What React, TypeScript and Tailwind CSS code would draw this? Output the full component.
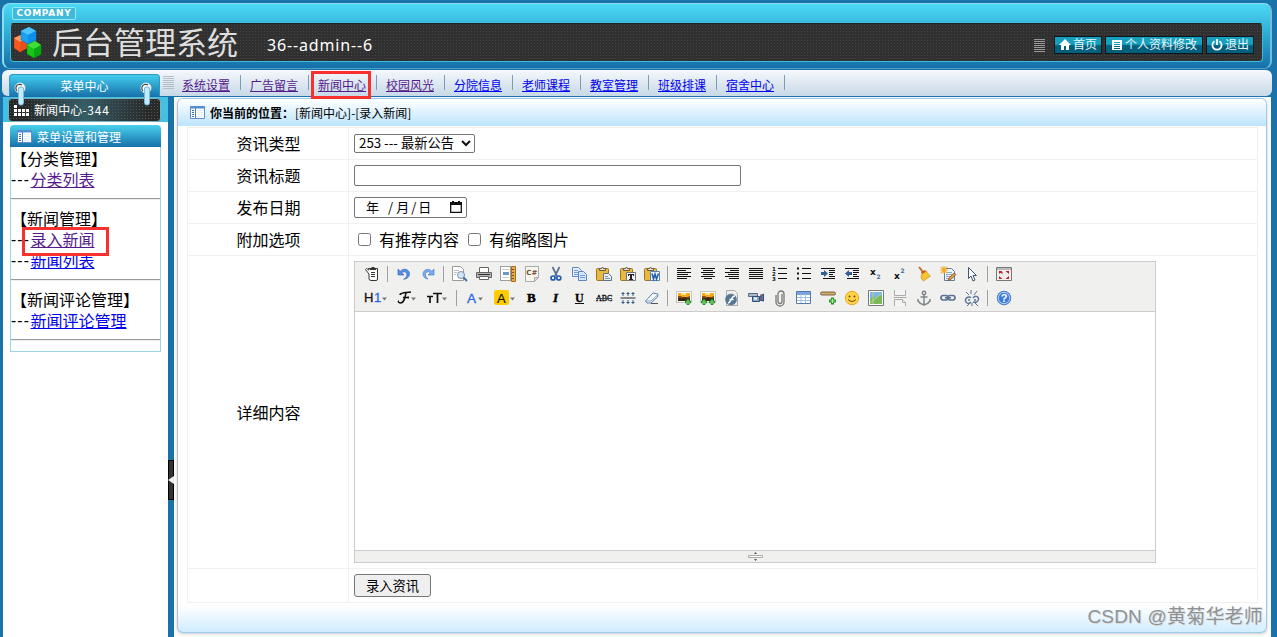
import type { ReactNode } from 'react';

type Tool = { name: string; icon: ReactNode; width?: string };
type MenuLink = { label: string; visited?: boolean; marked?: boolean };

const NAV_LINKS: MenuLink[] = [
  { label: '系统设置', visited: true },
  { label: '广告留言', visited: true },
  { label: '新闻中心', visited: true, marked: true },
  { label: '校园风光', visited: true },
  { label: '分院信息' },
  { label: '老师课程' },
  { label: '教室管理' },
  { label: '班级排课' },
  { label: '宿舍中心' },
];

const MENU_GROUPS: { title: string; links: MenuLink[] }[] = [
  { title: '分类管理', links: [{ label: '分类列表', visited: true }] },
  {
    title: '新闻管理',
    links: [{ label: '录入新闻', visited: true, marked: true }, { label: '新闻列表' }],
  },
  { title: '新闻评论管理', links: [{ label: '新闻评论管理' }] },
];

const lines = (rows: number[][]) => (
  <g shapeRendering="crispEdges" stroke="#111" strokeWidth="1">
    {rows.map(([x1, x2, y]) => (
      <path d={`M${x1} ${y + 0.5}H${x2}`} key={`${x1}-${y}`} />
    ))}
  </g>
);

const Clipboard = ({ children }: { children: ReactNode }) => (
  <>
    <rect fill="#e8b93c" height="12" rx="1" stroke="#9a7424" width="12" x=".5" y="2.500" />
    <path d="M3.500 4.500V2.500h2l1-1.500 1 1.500h2v2z" fill="#ddd" stroke="#665a3a" />
    {children}
  </>
);

const Photo = () => (
  <>
    <rect fill="#fff" height="11" stroke="#c4c4c4" width="15" x=".5" y="1.500" />
    <path d="M2 3h12v4H2z" fill="#f8a81c" />
    <path d="M5 3h5v2H5z" fill="#ffe27a" />
    <path d="M2 7h12v4H2z" fill="#3c2712" />
    <path d="M2 6l3 0 3 2 3-1 3-1v2H2z" fill="#8a4c10" />
  </>
);

const Plus = ({ x }: { x: number }) => (
  <>
    <path d={`M${x} 12h6M${x + 3} 9v6`} stroke="#23902a" strokeWidth="2.600" />
    <path d={`M${x + 1} 12h4M${x + 3} 10v4`} stroke="#7ddc6e" strokeWidth="1" />
  </>
);

const Caret = ({ x }: { x: number }) => <path d={`M${x} 7.500h5l-2.500 3z`} fill="#777" />;

const ROW_ONE: (Tool | null)[] = [
  {
    name: 'source',
    icon: (
      <g fill="none" stroke="#333">
        <path d="M4.500 2.500h9v10.500q0 1.500-1.500 1.500H7q-2 0-2-2V8L1.500 3.500l1-1L5 4z" fill="#fff" />
        <path d="M6 3.500h6M7.500 1.500h3M7 6.500h4M7 8.500h4M7 10.500h4" />
      </g>
    ),
  },
  null,
  {
    name: 'undo',
    icon: <path d="M2 3v6h6L5.800 6.800C8 4.800 11 6 10.800 9c-.1 2-1.500 3.500-3.300 4.300 3.500-.3 6-2.300 6-5.500C13.500 3.500 8 1.500 4.200 5.200z" fill="#5b8ee0" stroke="#2c62b8" strokeWidth=".6" />,
  },
  {
    name: 'redo',
    icon: <path d="M14 3v6H8l2.200-2.200C8 4.800 5.500 6 5.500 8.500c0 2 1 3.500 2.500 4.500-3-.3-5-2.300-5-5C3 4 8 1.500 11.800 5.200z" fill="#7eaeea" stroke="#3973c4" strokeWidth=".6" />,
  },
  null,
  {
    name: 'preview',
    icon: (
      <g fill="none">
        <path d="M.5.5h8l3 3v11H.500z" fill="#fff" stroke="#9a9a9a" />
        <path d="M2 4.500h5M2 6.500h3M2 8.500h2" stroke="#bbb" />
        <circle cx="9" cy="9" fill="#cfe5f8" r="3.500" stroke="#7a8fa8" />
        <path d="M11.500 11.500l3.500 3.500" stroke="#4b6d9a" strokeWidth="2" />
      </g>
    ),
  },
  {
    name: 'print',
    icon: (
      <g stroke="#666">
        <path d="M3.500 1.500h9v5h-9z" fill="#fff" />
        <path d="M.5 6.500h15v5H.500z" fill="#b5b5b5" />
        <path d="M2 8.500h12" stroke="#333" />
        <path d="M3.500 10.500h9v3h-9z" fill="#fff" />
      </g>
    ),
  },
  {
    name: 'template',
    icon: (
      <>
        <path d="M.5.5h10v14H.5z" fill="#fff" stroke="#444" strokeDasharray="1 1" />
        <path d="M2 3h7v1H2zM2 11h7v1H2z" fill="#ccc" />
        <path d="M3 6h6v3H3z" fill="#6d97cb" />
        <path d="M11.500.5h4v15h-4z" fill="#e6ad4c" stroke="#a86e1b" />
        <path d="M12 3.500h2M12 6.500h2M12 9.500h2M12 12.500h2" stroke="#805217" />
      </>
    ),
  },
  {
    name: 'code',
    icon: (
      <>
        <path d="M1.500.5h13v11l-4 4h-9z" fill="#f7f5ef" stroke="#aaa" />
        <path d="M10.500 15.500v-4h4z" fill="#ddd" stroke="#aaa" />
        <text fill="#78502c" fontFamily="DejaVu Sans" fontSize="7" fontWeight="bold" x="2.300" y="9">C#</text>
      </>
    ),
  },
  {
    name: 'cut',
    icon: (
      <g fill="none">
        <path d="M4.500 1l4.500 9M11.500 1L7 10" stroke="#587291" strokeWidth="1.700" />
        <circle cx="5" cy="12" r="2" stroke="#235ca8" strokeWidth="1.700" />
        <circle cx="10.800" cy="12" r="2" stroke="#235ca8" strokeWidth="1.700" />
      </g>
    ),
  },
  {
    name: 'copy',
    icon: (
      <g stroke="#5d86c2">
        <path d="M.5 1.500h6l3 3v6h-9z" fill="#e5f0fd" />
        <path d="M2 4.500h4M2 6.500h5M2 8.500h5" strokeWidth=".8" />
        <path d="M6.500 5.500h5l3 3v6h-8z" fill="#d1e5fb" />
        <path d="M8 9.500h5M8 11.500h5" strokeWidth=".8" />
      </g>
    ),
  },
  {
    name: 'paste',
    icon: <Clipboard><path d="M7.500 7.500h5l3 3v4h-8z" fill="#e9eef5" stroke="#5d7188" /><path d="M9 10.500h3M9 12.500h5" stroke="#7b91aa" /></Clipboard>,
  },
  {
    name: 'plainpaste',
    icon: <Clipboard><path d="M6.500 6.500h9v8h-9z" fill="#edf1f5" stroke="#777" /><path d="M8 8h6v2h-1V9h-1v4h1v1H9v-1h1V9H9v1H8z" fill="#222" /></Clipboard>,
  },
  {
    name: 'wordpaste',
    icon: <Clipboard><path d="M6.500 5.500h9v9h-9z" fill="#edf4fd" stroke="#5a82b5" /><path d="M8 7.500l1.500 5.500 1.500-5 1.500 5 2-5.500" fill="none" stroke="#235aa9" strokeWidth="1.500" /></Clipboard>,
  },
  null,
  { name: 'left', icon: lines([[1, 15, 2], [1, 10, 4], [1, 15, 6], [1, 12, 8], [1, 15, 10], [1, 11, 12]]) },
  { name: 'center', icon: lines([[1, 15, 2], [3, 13, 4], [1, 15, 6], [3, 13, 8], [1, 15, 10], [4, 12, 12]]) },
  { name: 'right', icon: lines([[1, 15, 2], [6, 15, 4], [1, 15, 6], [4, 15, 8], [1, 15, 10], [5, 15, 12]]) },
  { name: 'full', icon: lines([[1, 15, 2], [1, 15, 4], [1, 15, 6], [1, 15, 8], [1, 15, 10], [1, 15, 12]]) },
  {
    name: 'orderedlist',
    icon: <>{lines([[6, 15, 2], [6, 15, 7], [6, 15, 12]])}<g fill="#111" fontFamily="DejaVu Sans" fontSize="5.500" fontWeight="bold"><text x="0" y="5">1</text><text x="0" y="10">2</text><text x="0" y="15">3</text></g></>,
  },
  {
    name: 'unorderedlist',
    icon: <>{lines([[6, 15, 2], [6, 15, 7], [6, 15, 12]])}<path d="M1 1.500h2v2H1zM1 6.500h2v2H1zM1 11.500h2v2H1z" fill="#111" /></>,
  },
  {
    name: 'indent',
    icon: <>{lines([[1, 15, 2], [9, 15, 4], [9, 15, 6], [9, 13, 8], [9, 15, 10], [3, 15, 12]])}<path d="M1 6h3V4l4 3.500L4 11V9H1z" fill="#355f94" /></>,
  },
  {
    name: 'outdent',
    icon: <>{lines([[1, 15, 2], [9, 15, 4], [9, 15, 6], [9, 13, 8], [9, 15, 10], [3, 15, 12]])}<path d="M8 6H5V4L1 7.500 5 11V9h3z" fill="#355f94" /></>,
  },
  {
    name: 'subscript',
    icon: <g fontFamily="DejaVu Sans" fontWeight="bold"><text fill="#111" fontSize="9" x="2" y="9">x</text><text fill="#42658f" fontSize="6" x="8.500" y="13">2</text></g>,
  },
  {
    name: 'superscript',
    icon: <g fontFamily="DejaVu Sans" fontWeight="bold"><text fill="#111" fontSize="9" x="2" y="13">x</text><text fill="#42658f" fontSize="6" x="8.500" y="7">2</text></g>,
  },
  {
    name: 'quickformat',
    icon: <><path d="M3 1l4 5" stroke="#b9762a" strokeWidth="2" /><path d="M5 6l4-2 2 3-4 3z" fill="#d94d2c" /><path d="M5.500 8.500l5-3.500c1 3 3 4 4 5l-7 5c-2-1-3-4-2-6.500z" fill="#f6c42d" stroke="#b88714" strokeWidth=".6" /></>,
  },
  {
    name: 'selectall',
    icon: (
      <>
        <path d="M4.500 2.500h7l3 3v9h-10z" fill="#edf3fa" stroke="#657c9d" />
        <path d="M6 6.500h6M6 8.500h6M6 10.500h5M6 12.500h6" stroke="#8ba5c5" />
        <path d="M4 0v8M0 4h8M1 1l6 6M7 1L1 7" stroke="#f3ae24" strokeWidth="1.200" />
        <path d="M9 12l5-5 2 1.500-5 5-3 1z" fill="#e29a46" stroke="#7a4820" strokeWidth=".7" />
      </>
    ),
  },
  { name: 'select', icon: <path d="M4.500 1.500v11l2.500-2.500 2 5 2-1-2-4.500h3.500z" fill="#fff" stroke="#40526c" /> },
  null,
  {
    name: 'fullscreen',
    icon: (
      <>
        <path d="M.5 1.500h15v13H.5z" fill="#f2eeee" stroke="#777" />
        <path d="M1 2h14v2H1z" fill="#bbb" />
        <path d="M3 5.500l4 .5-1 1 1.500 1.500L3 6zM3 5h3.500L3 8zM13 5H9.500L13 8zM3 13h3.500L3 10zM13 13H9.500L13 10z" fill="#b6202a" />
      </>
    ),
  },
];

const ROW_TWO: (Tool | null)[] = [
  { name: 'formatblock', width: 'w-[31px]', icon: <><text fill="#111" fontFamily="Liberation Sans" fontSize="13" letterSpacing=".6" stroke="#111" strokeWidth=".3" x="0" y="12">H<tspan fill="#2866e8" stroke="#2866e8">1</tspan></text><Caret x={18} /></> },
  { name: 'fontname', width: 'w-[31px]', icon: <><path d="M6 3.500C8 2 11 3 15 2M10 3C9 8 8 13 4.500 13 2 13 2 11 3 11M7 7.500h5.500M12.500 6.500l-.5 2M4 5c0-1 1-1.500 2-1.500" fill="none" stroke="#111" strokeWidth="1.400" transform="translate(1)" /><Caret x={16} /></> },
  { name: 'fontsize', width: 'w-[31px]', icon: <><path d="M1 6.500h6M4 6.500V13M7 3.500h9M11.500 3.500V13" stroke="#111" strokeWidth="1.700" /><Caret x={16} /></> },
  null,
  { name: 'forecolor', width: 'w-[29px]', icon: <><text fill="#2866e8" fontFamily="Liberation Sans" fontSize="13.500" stroke="#2866e8" strokeWidth=".3" x="2" y="13">A</text><Caret x={13} /></> },
  { name: 'hilitecolor', width: 'w-[30px]', icon: <><rect fill="#fc0" height="15" rx="2" width="15" x="0" y="0" /><text fill="#111" fontFamily="Liberation Sans" fontSize="13" stroke="#111" strokeWidth=".2" x="3" y="12.500">A</text><Caret x={16} /></> },
  { name: 'bold', icon: <text fontFamily="Liberation Serif" fontSize="13" fontWeight="bold" stroke="#000" strokeWidth=".5" x="3" y="12">B</text> },
  { name: 'italic', icon: <text fontFamily="Liberation Serif" fontSize="13" fontStyle="italic" fontWeight="bold" stroke="#000" strokeWidth=".4" x="5" y="12">I</text> },
  { name: 'underline', icon: <><text fontFamily="Liberation Serif" fontSize="12" fontWeight="bold" stroke="#000" strokeWidth=".3" x="3" y="11.500">U</text><path d="M3 13.500h9" stroke="#111" /></> },
  { name: 'strikethrough', icon: <><text fontFamily="Liberation Serif" fontSize="8" stroke="#000" strokeWidth=".3" x="0" y="11">ABC</text><path d="M0 8.500h16" stroke="#35475e" /></> },
  { name: 'lineheight', icon: <><path d="M.5 8h15" stroke="#888" strokeWidth="2" /><path d="M3 2v4M8 2v4M13 2v4M1.500 3.500h3M6.500 3.500h3M11.500 3.500h3M3 10v4M8 10v4M13 10v4M1.500 12.500h3M6.500 12.500h3M11.500 12.500h3" stroke="#284d79" strokeWidth=".9" /></> },
  { name: 'removeformat', icon: <><path d="M9 3l5 1-.5 3L7 13H3l-1.500-2z" fill="#f7faff" stroke="#6181ab" /><path d="M1.500 11l5.500 0L13.500 5" fill="none" stroke="#89a3c4" /><path d="M7 13.500h7" stroke="#555" /></> },
  null,
  { name: 'image', icon: <><Photo /><Plus x={9} /></> },
  { name: 'multiimage', icon: <><Photo /><Plus x={1} /><Plus x={9} /></> },
  { name: 'flash', icon: <><path d="M2.500.5h8l3 3v12h-11z" fill="#eee" stroke="#aaa" /><circle cx="7" cy="9.500" fill="#55769b" r="5.500" stroke="#6d7b89" strokeWidth=".7" /><path d="M4 13c3 0 3-7 7-7M5.500 9.500h4" fill="none" stroke="#fff" strokeWidth="1.600" /></> },
  { name: 'media', icon: <><path d="M.5 3.500h9v3h-9z" fill="#a8bacd" stroke="#536a84" /><path d="M4.500 6.500h7v5h-7z" fill="#87a7ca" stroke="#345374" /><path d="M11.500 7l4-3v7l-4-1z" fill="#5580b1" stroke="#2e4b6b" /><path d="M6 8.500h3" stroke="#fff" strokeWidth="2" /><path d="M13 4v7" stroke="#983b48" /></> },
  { name: 'insertfile', icon: <path d="M10 4v7.500a2 2 0 0 1-4 0V4a3 3 0 0 1 6 0v8a4 4 0 0 1-8 0V5" fill="none" stroke="#777" strokeWidth="1.300" /> },
  { name: 'table', icon: <><path d="M.5 1.500h14v12H.5z" fill="#fff" stroke="#5278ae" /><path d="M1 2h13v3H1z" fill="#7ba4dc" /><path d="M1 7.500h13M1 10.500h13M5 4v9M9.500 4v9" stroke="#a5bfe0" /></> },
  { name: 'hr', icon: <><rect fill="#d1ad72" height="3" rx="1.500" stroke="#654620" strokeWidth=".8" width="15" x=".5" y="2" /><path d="M9 11h7M12.500 7.500v7" stroke="#279a27" strokeWidth="3" /><path d="M10.500 11h4M12.500 9v4" stroke="#b5eeac" /></> },
  { name: 'emoticons', icon: <><circle cx="8" cy="8" fill="#ffd447" r="6.700" stroke="#e9a620" /><circle cx="5.500" cy="6.500" fill="#76470e" r="1" /><circle cx="10.500" cy="6.500" fill="#76470e" r="1" /><path d="M4 9.500q4 4 8 0" fill="none" stroke="#76470e" /></> },
  { name: 'baidumap', icon: <><path d="M.5.5h15v15H.5z" fill="#fff" stroke="#777" /><path d="M2 2h12v12H2z" fill="#7db5e7" /><path d="M2 10l3-4 3 2 3-3 3 1v8H2z" fill="#7cb95a" /><path d="M2 13L13 4M5 2v12" stroke="#b2d88c" /></> },
  { name: 'pagebreak', icon: <g fill="#f5f5f5" stroke="#aaa"><path d="M2.500 0v5.500h11V0M2.500 16V9.500h8l3 3V16" /><path d="M10.500 9.500v3h3M1.500 7.500h13" /></g> },
  { name: 'anchor', icon: <g fill="none" stroke="#7e858b" strokeWidth="1.500"><circle cx="8" cy="3" r="1.700" /><path d="M8 5v10M4.500 7h7M2 9v2c2 3 4 3.500 6 4 2-.5 4-1 6-4V9" /></g> },
  { name: 'link', icon: <g fill="none" stroke="#5b7394" strokeWidth="1.700"><rect height="4.500" rx="2.200" width="7" x="1" y="5.500" /><rect height="4.500" rx="2.200" width="7" x="8" y="5.500" /><path d="M5 7.800h6" /></g> },
  { name: 'unlink', icon: <g fill="none" stroke="#5b7394" strokeWidth="1.500"><path d="M7 7.500C4 6 1 8 1.500 11s4 3 5.500 1M9 8c2-2.500 5-2 5.500.5S12 13 9 12M4 10h2M10 10h2" /><path d="M2 2l3 3M7 0v4M13 1l-3 4M3 16l2-2M8 13v3M11 13l3 3" strokeWidth="1" /></g> },
  null,
  { name: 'about', icon: <><circle cx="8" cy="8" fill="#3e7cdb" r="6.800" stroke="#4d7cc0" /><circle cx="8" cy="8" fill="none" r="5.700" stroke="#bad4f6" /><text fill="#fff" fontFamily="Liberation Sans" fontSize="11" fontWeight="bold" x="4.700" y="12">?</text></> },
];

function ToolRow({ tools }: { tools: (Tool | null)[] }) {
  return (
    <div className="flex h-6 items-center">
      {tools.map((tool, index) =>
        tool ? (
          <span
            className={`${tool.width ?? 'w-6'} flex h-6 shrink-0 items-center pl-1`}
            key={tool.name}
            title={tool.name}
          >
            <svg className="overflow-visible" height="16" viewBox="0 0 16 16" width="16">
              {tool.icon}
            </svg>
          </span>
        ) : (
          <span className="ml-[3px] mr-1 h-4 w-px shrink-0 bg-[#a0a0a0]" key={`split-${index}`} />
        ),
      )}
    </div>
  );
}

function Logo() {
  return (
    <svg className="ml-[3px] shrink-0" height="34" viewBox="0 0 28 34" width="28">
      <g strokeLinejoin="round" strokeWidth=".5">
        <path d="M0 12l7-3 6 4v9l-7 4-6-4z" fill="#f55a1c" stroke="#b63b10" />
        <path d="M0 12l7-3 6 4-7 3z" fill="#ff9b63" />
        <path d="M6 16l7-3v9l-7 4z" fill="#e8501a" />
        <path d="M7 5l8-4 7 4v9l-8 4-7-4z" fill="#18a1ef" stroke="#0876c3" />
        <path d="M7 5l8-4 7 4-8 4z" fill="#4cc4ff" />
        <path d="M14 9l8-4v9l-8 4z" fill="#0b8fe8" />
        <path d="M13 19l8-4 6 4v9l-7 4-7-4z" fill="#19c51a" stroke="#068c0b" />
        <path d="M13 19l8-4 6 4-7 4z" fill="#42dd38" />
        <path d="M20 23l7-4v9l-7 4z" fill="#07a90f" />
      </g>
    </svg>
  );
}

function Bars() {
  return (
    <svg height="13" shapeRendering="crispEdges" stroke="currentColor" viewBox="0 0 11 13" width="11">
      <path d="M0 .5h11M0 2.500h11M0 4.500h11M0 6.500h11M0 8.500h11M0 10.500h11M0 12.500h11" />
    </svg>
  );
}

function WindowIcon() {
  return (
    <svg className="shrink-0" height="13" viewBox="0 0 15 13" width="15">
      <path d="M.5.5h14v12H.5z" fill="#fff" stroke="#5d8cc6" />
      <path d="M1 1h13v1.500H1z" fill="#4f8ddd" />
      <path d="M5.500 2v10" stroke="#4d7fb8" />
      <path d="M2 4.500h2M2 6.500h2M2 8.500h2M2 10.500h2" stroke="#3f6fae" />
      <path d="M7 4.500h6M7 6.500h6M7 8.500h6M7 10.500h6" stroke="#e3ecf8" />
    </svg>
  );
}

function HeaderButton({ children, icon, className }: { children: ReactNode; icon: ReactNode; className: string }) {
  return (
    <button
      className={`${className} flex h-[18px] items-center justify-center gap-0.5 whitespace-nowrap border border-[#07191f] bg-linear-to-b from-[#17a0be] from-45% to-[#035f7c] to-55% text-xs leading-4 text-[#e6f6fa]`}
      type="button"
    >
      <svg className="shrink-0" fill="#fff" height="12" viewBox="0 0 12 12" width="12">
        {icon}
      </svg>
      <span className="-mt-0.5">{children}</span>
    </button>
  );
}

function Header() {
  return (
    <header className="mx-[2px] mr-[5px] h-[66px] rounded-lg border-x-2 border-b border-t border-[#8dddf2] border-b-[#4b9fc9] border-r-[#72bddd] bg-linear-to-b from-[#4bd9f5] via-[#2ca8d2] to-[#176fa8] px-2 pt-[3px]">
      <div className="flex h-[13px] w-16 items-center justify-center rounded-xs border border-[#8cecfa] bg-[#42b9d8] font-['DejaVu_Sans'] text-[9px] font-bold leading-none tracking-[0.7px] text-white">
        COMPANY
      </div>
      <div className="-ml-[2px] -mr-px mt-[3px] flex h-[39px] items-center rounded border border-t-[#222] border-[#39bddb] bg-[#303030] bg-[radial-gradient(#454545_0.6px,transparent_0.8px)] bg-size-[3px_3px] pr-[8px]">
        <Logo />
        <h1 className="ml-[10px] -mt-1 text-[31px] leading-[38px] text-[#dedede]">后台管理系统</h1>
        <span className="ml-[29px] mt-1 font-['Noto_Sans'] text-base leading-5 tracking-[0.85px] text-white">36--admin--6</span>
        <div className="ml-auto mt-[5px] flex items-center gap-[2px]">
          <span className="mr-[7px] text-[#999]"><Bars /></span>
          <HeaderButton className="w-[48px]" icon={<path d="M6 0L0 6h2v5h3V7h2v4h3V6h2z" />}>首页</HeaderButton>
          <HeaderButton className="ml-px w-[98px]" icon={<path d="M1 1h10v10H1zM3 3v1h6V3zm0 2v1h6V5zm0 2v1h6V7zm0 2v1h6V9z" fillRule="evenodd" />}>
            个人资料修改
          </HeaderButton>
          <HeaderButton className="ml-px w-[48px]" icon={<path d="M3.500 2.200a4.600 4.600 0 1 0 5 0M6 0v6" fill="none" stroke="#fff" strokeWidth="1.800" />}>
            退出
          </HeaderButton>
        </div>
      </div>
    </header>
  );
}

function Pin({ className }: { className: string }) {
  return (
    <svg className={`absolute z-10 ${className}`} height="24" viewBox="0 0 12 24" width="12">
      <circle cx="6" cy="6" fill="#fff" r="5" stroke="#d7e8f0" />
      <path d="M3 9a4 4 0 0 1-1-4 4 4 0 0 1 6-2" fill="none" stroke="#444" strokeWidth="1.200" />
      <path d="M7 7.500v13" stroke="#5ba7d2" strokeLinecap="round" strokeWidth="6" />
      <path d="M7 7.500v13" stroke="#c5e9ff" strokeLinecap="round" strokeWidth="4.600" />
    </svg>
  );
}

function NavBar() {
  return (
    <div className="ml-[2px] mr-[5px] flex h-[26px] rounded-md bg-linear-to-b from-[#f5f8fc] to-[#c8d9e7]">
      <div className="relative ml-[7px] mt-1 h-[22px] w-[151px] rounded-t border border-b-0 border-[#2e98c2] bg-linear-to-b from-[#43cdec] to-[#1a75ad] text-center text-xs leading-[21px] text-white">
        菜单中心
        <Pin className="left-1 top-[7px]" />
        <Pin className="right-[7px] top-[7px]" />
      </div>
      <span className="ml-[3px] mt-[6px] text-[#b5bdc5]"><Bars /></span>
      <nav className="-ml-px flex text-xs">
        {NAV_LINKS.map((link) => (
          <div className="relative flex h-[26px] w-[68px] justify-center pr-[2px] pt-[6px]" key={link.label}>
            <a className={`${link.visited ? 'text-[#551a8b]' : 'text-[#0000ee]'} leading-[18px] underline`} href="#">
              {link.label}
            </a>
            <span className="absolute right-0 top-[5px] h-[15px] w-px bg-[#7e9db3]" />
            {link.marked && <span className="absolute left-[2px] top-px z-10 h-[28px] w-[60px] border-3 border-[#f8312f]" />}
          </div>
        ))}
      </nav>
    </div>
  );
}

function SideMenu() {
  return (
    <aside className="h-[540px] w-[165px] shrink-0 bg-white">
      <div className="h-[25px] bg-[#43c0e2] px-[5px] pt-px">
        <div className="flex h-6 w-[153px] items-center rounded border border-[#79b3c0] bg-[#2b2f30] bg-[radial-gradient(#555_0.6px,transparent_0.8px),linear-gradient(90deg,#272727_10%,#315e68_50%,#292929_92%)] bg-size-[3px_3px,auto] pl-[5px] text-xs text-white">
          <svg fill="#fff" height="11" viewBox="0 0 16 11" width="16">
            <path d="M0 0h3v3H0zM0 4h3v3H0zM4 4h3v3H4zM8 4h3v3H8zM12 4h3v3h-3zM0 8h3v3H0zM4 8h3v3H4zM8 8h3v3H8zM12 8h3v3h-3z" />
          </svg>
          <span className="ml-1 tracking-[0.1px]">新闻中心<span className="tracking-[0.8px]">-344</span></span>
        </div>
      </div>
      <div className="ml-[7px] mt-[3px] w-[151px]">
        <div className="flex h-[22px] items-center rounded-t bg-linear-to-b from-[#49d1ed] to-[#1871aa] pl-[7px] text-xs text-white">
          <WindowIcon />
          <span className="ml-[5px] pt-0.5">菜单设置和管理</span>
        </div>
        <div className="h-[205px] border border-t-0 border-[#9bd6e2] pt-px text-base leading-[21px]">
          {MENU_GROUPS.map((group) => (
            <div key={group.title}>
              <div className="whitespace-nowrap">【{group.title}】</div>
              {group.links.map((link) => (
                <div className="relative flex" key={link.label}>
                  <span className="w-[19.500px] shrink-0 whitespace-nowrap font-['Noto_Sans'] tracking-[1.2px]">---</span>
                  <a className={`${link.visited ? 'text-[#551a8b]' : 'text-[#0000ee]'} whitespace-nowrap underline`} href="#">
                    {link.label}
                  </a>
                  {link.marked && <span className="absolute left-[11px] -top-[2px] z-10 h-[29px] w-[87px] border-3 border-[#f8312f]" />}
                </div>
              ))}
              <hr className="my-2 h-[2px] border-b border-t border-b-[#eee] border-t-[#999]" />
            </div>
          ))}
        </div>
      </div>
    </aside>
  );
}

function Editor() {
  return (
    <div className="flex h-[302px] w-[802px] flex-col border border-[#ccc]">
      <div className="h-[50px] border-b border-[#ccc] bg-[#f0f0ee] pl-[5px]">
        <ToolRow tools={ROW_ONE} />
        <ToolRow tools={ROW_TWO} />
      </div>
      <div className="flex-1 bg-white" />
      <div className="flex h-3 items-center justify-center border-t border-[#ccc] bg-[#f0f0ee]">
        <svg height="9" viewBox="0 0 15 9" width="15">
          <path d="M6 2h3L7.500 0zM6 7h3L7.500 9z" fill="#555" />
          <path d="M.5 3.500h14v2H.5z" fill="#fff" stroke="#aaa" />
        </svg>
      </div>
    </div>
  );
}

function FormRow({ label, height, children }: { label?: string; height: string; children: ReactNode }) {
  return (
    <div className={`${height} flex border-b border-[#f0f0f0]`}>
      <div className="flex w-[161px] shrink-0 items-center justify-center border-r border-[#f0f0f0] pb-px pl-px text-base">{label}</div>
      <div className="flex items-center pl-[5px]">{children}</div>
    </div>
  );
}

function NewsForm() {
  return (
    <form className="mx-[9px] mr-[8px] mt-px border-x border-t border-[#f0f0f0] bg-white">
      <FormRow height="h-8" label="资讯类型">
        <div className="relative">
          <select className="block h-[19px] w-[121px] appearance-none rounded-xs border border-[#767676] bg-white pb-0.5 pl-1 text-[13.3px] leading-[15px]">
            <option>253 --- 最新公告</option>
          </select>
          <svg className="pointer-events-none absolute right-1 top-[6px]" height="7" viewBox="0 0 10 7" width="10">
            <path d="M1 1l4 4 4-4" fill="none" stroke="#111" strokeWidth="2" />
          </svg>
        </div>
      </FormRow>
      <FormRow height="h-8" label="资讯标题">
        <input className="h-[21px] w-[387px] rounded-xs border border-[#767676]" type="text" />
      </FormRow>
      <FormRow height="h-8" label="发布日期">
        <div className="flex h-[21px] w-[113px] items-center rounded-xs border border-[#767676] pb-px text-[13px]">
          <span className="ml-[11px]">年</span>
          <span className="ml-[9px]">/</span>
          <span className="ml-[3px]">月</span>
          <span className="ml-[2px]">/</span>
          <span className="ml-[2px]">日</span>
          <svg className="ml-auto mr-1" height="12" viewBox="0 0 12 12" width="12">
            <path d="M.7 2h10.600v9.300H.7z" fill="none" stroke="#111" strokeWidth="1.300" />
            <path d="M0 1h12v3H0zM2 0h2v2H2zM8 0h2v2H8z" fill="#111" />
          </svg>
        </div>
      </FormRow>
      <FormRow height="h-8" label="附加选项">
        <input className="ml-1 size-[13px]" type="checkbox" />
        <span className="ml-2 pb-px">有推荐内容</span>
        <input className="ml-[9px] size-[13px]" type="checkbox" />
        <span className="ml-2 pb-px">有缩略图片</span>
      </FormRow>
      <FormRow height="h-[313px]" label="详细内容">
        <Editor />
      </FormRow>
      <FormRow height="h-[34px]">
        <button className="h-[23px] w-[77px] rounded-[3px] border border-[#767676] bg-[#efefef] text-[13.3px] leading-5" type="button">
          录入资讯
        </button>
      </FormRow>
    </form>
  );
}

export default function App() {
  return (
    <div className="relative h-[637px] w-[1277px] overflow-hidden bg-[#1973aa] pt-[3px] font-['Noto_Sans_CJK_SC',sans-serif] text-black">
      <Header />
      <div className="mt-px">
        <NavBar />
      </div>
      <div className="ml-[3px] mt-px flex">
        <SideMenu />
        <div className="flex h-[540px] w-[6px] shrink-0 flex-col pt-[363px]">
          <button className="flex h-10 w-[6px] items-center border border-black bg-[#333]" type="button">
            <svg className="-ml-px shrink-0" height="8" viewBox="0 0 6 8" width="6"><path d="M6 0v8L0 4z" fill="#eee" /></svg>
          </button>
        </div>
        <div className="h-[540px] w-[1097px] bg-[#fcfcfc] pl-[3px] pt-px">
          <main className="h-[535px] w-[1090px] rounded-md border border-[#9acbea] border-l-[#b9bec9] bg-linear-to-b from-white from-[95%] to-[#d0edff] to-100% shadow-[0_1px_3px_#ccc]">
            <div className="flex h-[27px] items-center rounded-t-md bg-linear-to-b from-white to-[#bce4fc] pl-3 text-xs">
              <WindowIcon />
              <span className="ml-[5px] font-bold">你当前的位置：</span>
              <span className="ml-px">[新闻中心]-[录入新闻]</span>
            </div>
            <NewsForm />
          </main>
        </div>
      </div>
      <div className="absolute bottom-[7px] right-[14px] font-['Liberation_Sans','Noto_Sans_CJK_SC',sans-serif] text-[19px] leading-[26px] tracking-[0.2px] text-[#8f9295] [text-shadow:1px_1px_0_#ddd]">
        CSDN @黄菊华老师
      </div>
    </div>
  );
}
